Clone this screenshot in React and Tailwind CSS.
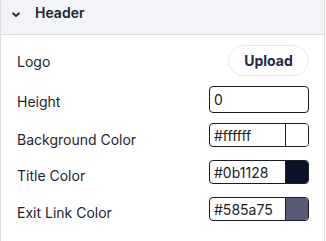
import React from 'react';

const colorFields = [
  { label: 'Background Color', value: '#ffffff', shift: 'pt-[8px]' },
  { label: 'Title Color', value: '#0b1128', shift: 'pt-[6px]' },
  { label: 'Exit Link Color', value: '#585a75', shift: 'pt-[7px]' },
];

const App = () => {
  return (
    <div className="w-[325px] h-[241px] bg-white border-x border-[#dcdde6] font-['Inter',sans-serif] text-[#24252b]">
      <div className="h-[35px] bg-[#f3f4f8] border-b border-[#dcdde6] flex items-center pl-[11px] pb-[10px]">
        <svg width="8" height="6" viewBox="0 0 8 6" className="mt-[5px]">
          <path d="M1.1 1.3 L4 4.2 L6.9 1.3" fill="none" stroke="#1f2330" strokeWidth="1.9" strokeLinecap="round" strokeLinejoin="round" />
        </svg>
        <span className="ml-[15px] text-[14px] font-semibold text-[#1f2330]">Header</span>
      </div>

      <div className="pl-[16px] pr-[15px] pt-[10px] flex flex-col">
        <div className="flex items-center justify-between h-[31px]">
          <span className="text-[14px] pt-[2px]">Logo</span>
          <button className="h-[31px] w-[81px] rounded-full border border-[#e8e9ef] bg-white text-[14px] font-bold text-[#1f2a44]">
            Upload
          </button>
        </div>

        <div className="flex items-center justify-between h-[27px] mt-[10px]">
          <span className="text-[14px] pt-[4px]">Height</span>
          <div className="w-[100px] h-[27px] border border-[#1b1c22] rounded-[4px] flex items-center px-[4px] text-[14px] text-[#1b1c22]">
            0
          </div>
        </div>

        {colorFields.map((f, i) => (
          <div key={f.label} className={`flex items-center justify-between h-[24px] ${i === 0 ? 'mt-[10px]' : 'mt-[13px]'}`}>
            <span className={`text-[14px] ${f.shift}`}>{f.label}</span>
            <div className="w-[100px] h-[24px] border border-[#1b1c22] rounded-[4px] flex overflow-hidden">
              <div className="flex-1 flex items-center px-[4px] text-[14px] text-[#1b1c22]">{f.value}</div>
              <div className="w-[23px] h-full border-l border-[#1b1c22]" style={{ backgroundColor: f.value }} />
            </div>
          </div>
        ))}
      </div>
    </div>
  );
};

export default App;
